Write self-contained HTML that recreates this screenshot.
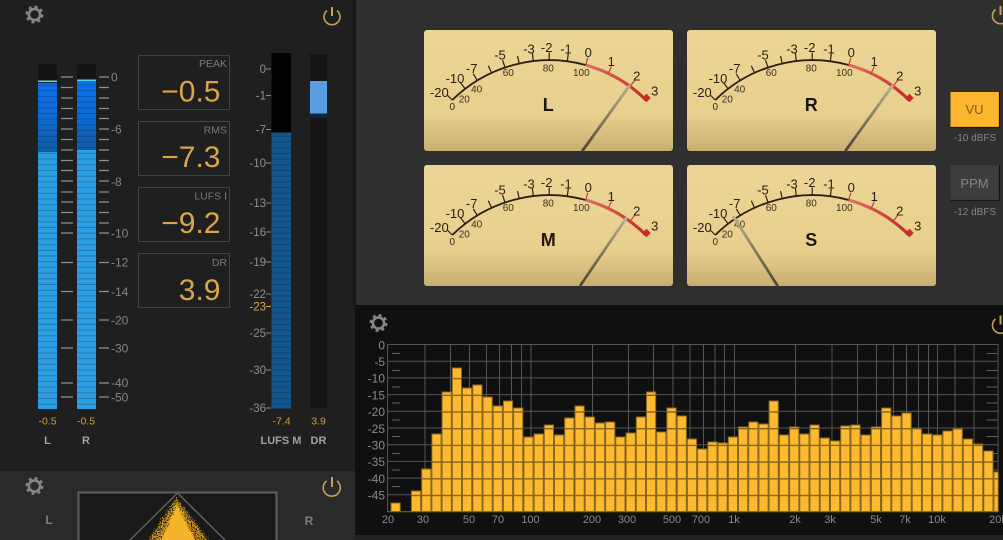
<!DOCTYPE html>
<html><head><meta charset="utf-8"><style>
html,body{margin:0;padding:0;background:#1f1f1f;width:1003px;height:540px;overflow:hidden}
svg{display:block;font-family:"Liberation Sans",sans-serif;filter:blur(.35px)}
.s{fill:#858585;font-size:12px}
.l{fill:#8e8e8e;font-size:11.5px}
.y{fill:#8a8a8a;font-size:12px;text-anchor:end}
.x{fill:#8a8a8a;font-size:11px;text-anchor:middle}
.v{fill:#d9a548;font-size:30px;text-anchor:end}
.lb{fill:#7a7a7a;font-size:10.5px;text-anchor:end}
.m{fill:#2a2112;font-size:13px;text-anchor:middle;transform:translateY(.4px)}
.n{fill:#3a3020;font-size:10px;text-anchor:middle}
.b{fill:#1c1710;font-size:18px;font-weight:bold;text-anchor:middle;transform:translateY(.8px)}
</style></head><body>
<svg width="1003" height="540" viewBox="0 0 1003 540" xmlns="http://www.w3.org/2000/svg">
<defs>
<linearGradient id="face" x1="0" y1="0" x2="0" y2="1"><stop offset="0" stop-color="#ecd596"/><stop offset=".7" stop-color="#e8cf8d"/><stop offset="1" stop-color="#c9ae72"/></linearGradient>
<linearGradient id="nd" x1="0" y1="0" x2="0" y2="1"><stop offset="0" stop-color="#b9b091"/><stop offset="1" stop-color="#4e4636"/></linearGradient>
<linearGradient id="red" gradientUnits="userSpaceOnUse" x1="586" y1="0" x2="646" y2="0"><stop offset="0" stop-color="#e0705f"/><stop offset="1" stop-color="#c42c28"/></linearGradient>
<linearGradient id="top" x1="0" y1="0" x2="0" y2="1"><stop offset="0" stop-color="#0d6fec"/><stop offset=".6" stop-color="#0d69cc"/><stop offset="1" stop-color="#0f5ca0"/></linearGradient>
<pattern id="st" width="4" height="5.7" patternUnits="userSpaceOnUse"><rect y="4.7" width="4" height="1" fill="#000" opacity=".22"/></pattern>
<pattern id="bar" width="4" height="16.7" patternUnits="userSpaceOnUse" y="344.5"><rect width="4" height="16.7" fill="#fdb92f"/><rect y="0" width="4" height="1.4" fill="#8a6418"/></pattern>
<filter id="sp" x="-30%" y="-30%" width="160%" height="160%"><feTurbulence type="fractalNoise" baseFrequency=".8" numOctaves="2" seed="4" result="n"/><feDisplacementMap in="SourceGraphic" in2="n" scale="10" xChannelSelector="R" yChannelSelector="G" result="d"/><feColorMatrix in="n" type="matrix" values="0 0 0 0 0 0 0 0 0 0 0 0 0 0 0 6 0 0 0 -2.3" result="m"/><feComposite in="d" in2="m" operator="in"/></filter>
<filter id="sq" x="-30%" y="-30%" width="160%" height="160%"><feTurbulence type="fractalNoise" baseFrequency=".8" numOctaves="2" seed="9"/><feDisplacementMap in="SourceGraphic" scale="8" xChannelSelector="R" yChannelSelector="G"/></filter>
<clipPath id="cb"><rect x="79" y="493" width="197" height="47"/></clipPath>
</defs>

<!-- backgrounds -->
<rect width="1003" height="540" fill="#1f1f1f"/>
<rect y="471" width="355" height="69" fill="#2a2a2a"/>
<rect x="353" width="4" height="306" fill="#191919"/>
<rect x="356" width="647" height="306" fill="#2f2f2f"/>
<rect x="355" y="305" width="648" height="230" fill="#101010"/>
<rect x="355" y="535" width="648" height="5" fill="#222"/>

<!-- top-left icons -->
<g fill="none" stroke="#858585"><circle cx="34.5" cy="14.5" r="5.6" stroke-width="2.6"/><circle cx="34.5" cy="14.5" r="7.8" stroke-width="2.4" stroke-dasharray="3 3.1"/></g>
<g fill="none" stroke="#c9a050" stroke-width="1.6"><path d="M327 10.5a8 8 0 1 0 10 0"/><path d="M332 7v9" stroke-width="2"/></g>

<!-- peak meters -->
<rect x="38" y="64" width="19" height="345" fill="#141414"/>
<rect x="77" y="64" width="19" height="345" fill="#141414"/>
<rect x="38" y="80.5" width="19" height="1.6" fill="#55d8e8"/>
<rect x="77" y="79.5" width="19" height="1.6" fill="#55d8e8"/>
<rect x="38" y="83" width="19" height="69" fill="url(#top)"/>
<rect x="77" y="81" width="19" height="69" fill="url(#top)"/>
<rect x="38" y="152" width="19" height="257" fill="#2c9ee2"/>
<rect x="77" y="150" width="19" height="259" fill="#2c9ee2"/>
<rect x="38" y="83" width="19" height="326" fill="url(#st)"/>
<rect x="77" y="81" width="19" height="328" fill="url(#st)"/>
<path stroke="#8f8f8f" stroke-width="1.2" fill="none" d="M61 77h12M61 87.5h12M61 98h12M61 108.5h12M61 118.5h12M61 129h12M61 139.5h12M61 150h12M61 160.5h12M61 170.5h12M61 181h12M61 192h12M61 202h12M61 212.5h12M61 223h12M61 233h12M61 262.5h12M61 291.5h12M61 320h12M61 348h12M61 383h12M61 397h12"/>
<path stroke="#8f8f8f" stroke-width="1.2" fill="none" d="M99 77h10M99 87.5h10M99 98h10M99 108.5h10M99 118.5h10M99 129h10M99 139.5h10M99 150h10M99 160.5h10M99 170.5h10M99 181h10M99 192h10M99 202h10M99 212.5h10M99 223h10M99 233h10M99 262.5h10M99 291.5h10M99 320h10M99 348h10M99 383h10M99 397h10"/>
<text class="s" x="111" y="81.5">0</text>
<text class="s" x="111" y="133.5">-6</text>
<text class="s" x="111" y="186">-8</text>
<text class="s" x="111" y="237.5">-10</text>
<text class="s" x="111" y="266.5">-12</text>
<text class="s" x="111" y="296">-14</text>
<text class="s" x="111" y="324.5">-20</text>
<text class="s" x="111" y="352.5">-30</text>
<text class="s" x="111" y="387">-40</text>
<text class="s" x="111" y="401.5">-50</text>
<g font-size="10.5" fill="#cf9c40" text-anchor="middle">
<text x="47.5" y="424.5">-0.5</text><text x="86" y="424.5">-0.5</text>
<text x="281.5" y="424.5">-7.4</text><text x="318.5" y="424.5">3.9</text>
</g>
<g font-size="11" font-weight="bold" fill="#a0a0a0" text-anchor="middle">
<text x="47.5" y="444">L</text><text x="86" y="444">R</text>
<text x="281" y="444">LUFS M</text><text x="318.5" y="444">DR</text>
</g>

<!-- readouts -->
<g fill="none" stroke="#444" stroke-width="1">
<rect x="138.5" y="55.5" width="91" height="54"/>
<rect x="138.5" y="121.5" width="91" height="54"/>
<rect x="138.5" y="187.5" width="91" height="54"/>
<rect x="138.5" y="253.5" width="91" height="54"/>
</g>
<text class="lb" x="227" y="67">PEAK</text><text class="v" x="220.5" y="101.5">−0.5</text>
<text class="lb" x="227" y="133.5">RMS</text><text class="v" x="220.5" y="167">−7.3</text>
<text class="lb" x="227" y="199.5">LUFS I</text><text class="v" x="220.5" y="233">−9.2</text>
<text class="lb" x="227" y="266">DR</text><text class="v" x="220.5" y="300">3.9</text>

<!-- LUFS + DR -->
<rect x="271.5" y="53" width="19.5" height="80" fill="#020202"/>
<rect x="271.5" y="132.5" width="19.5" height="276" fill="#14578f"/>
<rect x="271.5" y="132.5" width="19.5" height="276" fill="url(#st)"/>
<rect x="310" y="54" width="17" height="354" fill="#151515"/>
<rect x="310" y="113" width="17" height="5" fill="#10263a"/>
<rect x="310" y="81" width="17" height="32.5" fill="#5a9de0"/>
<g class="l" text-anchor="end">
<text x="266" y="73">0</text>
<text x="266" y="99.5">-1</text>
<text x="266" y="133.5">-7</text>
<text x="266" y="167">-10</text>
<text x="266" y="207">-13</text>
<text x="266" y="236">-16</text>
<text x="266" y="266">-19</text>
<text x="266" y="298">-22</text>
<text x="266" y="310.5" fill="#d9a548">-23</text>
<text x="266" y="337">-25</text>
<text x="266" y="374">-30</text>
<text x="266" y="412">-36</text>
</g>
<path stroke="#8a8a8a" fill="none" d="M266 69h5M266 95.5h5M266 129.5h5M266 163h5M266 203h5M266 232h5M266 262h5M266 294h5M266 333h5M266 370h5M266 408h5"/>
<path stroke="#d9a548" fill="none" d="M266 306.5h5"/>

<!-- vectorscope -->
<g fill="none" stroke="#858585"><circle cx="34.5" cy="486" r="5.6" stroke-width="2.6"/><circle cx="34.5" cy="486" r="7.8" stroke-width="2.4" stroke-dasharray="3 3.1"/></g>
<g fill="none" stroke="#c9a050" stroke-width="1.6"><path d="M326.5 481a8.5 8.5 0 1 0 10.5 0"/><path d="M332 477v10" stroke-width="2"/></g>
<text x="49" y="524" font-size="12" font-weight="bold" fill="#7d7d7d" text-anchor="middle">L</text>
<text x="309" y="525" font-size="12" font-weight="bold" fill="#7d7d7d" text-anchor="middle">R</text>
<rect x="78.5" y="492.5" width="198" height="60" fill="#191919" stroke="#5f5f5f" stroke-width="2"/>
<g clip-path="url(#cb)">
<path d="M177.5 493L128 542M177.5 493L227 542" stroke="#5f5f5f" stroke-width="1.5" fill="none"/>
<path d="M177 498L148 542H210z" fill="#e0a028" filter="url(#sp)"/>
<path d="M177 504L160 542H196z" fill="#f5b42c" filter="url(#sq)"/>
</g>

<!-- VU meter L -->
<g>
<rect x="424" y="30" width="249" height="121" rx="3" fill="url(#face)"/>
<path d="M452.3 100A138.4 138.4 0 0 1 585.7 65" fill="none" stroke="#2a2010" stroke-width="1.8"/>
<path d="M585.7 65A138.4 138.4 0 0 1 646 100" fill="none" stroke="url(#red)" stroke-width="3.2"/>
<g stroke="#2a2010" stroke-width="1.2">
<line x1="549.2" y1="60.3" x2="549.2" y2="54" transform="rotate(-44.5 549.2 198.7)"/>
<line x1="549.2" y1="60.3" x2="549.2" y2="52.5" transform="rotate(-37.4 549.2 198.7)"/>
<line x1="549.2" y1="60.3" x2="549.2" y2="52.5" transform="rotate(-31.3 549.2 198.7)"/>
<line x1="549.2" y1="60.3" x2="549.2" y2="52.5" transform="rotate(-24.6 549.2 198.7)"/>
<line x1="549.2" y1="60.3" x2="549.2" y2="52.5" transform="rotate(-18.6 549.2 198.7)"/>
<line x1="549.2" y1="60.3" x2="549.2" y2="52.5" transform="rotate(-12.5 549.2 198.7)"/>
<line x1="549.2" y1="60.3" x2="549.2" y2="52.5" transform="rotate(-6.6 549.2 198.7)"/>
<line x1="549.2" y1="60.3" x2="549.2" y2="52.5"/>
<line x1="549.2" y1="60.3" x2="549.2" y2="52.5" transform="rotate(7.5 549.2 198.7)"/>
</g>
<g stroke="#c0453a" stroke-width="1.2">
<line x1="549.2" y1="60.3" x2="549.2" y2="52.5" transform="rotate(15.3 549.2 198.7)"/>
<line x1="549.2" y1="60.3" x2="549.2" y2="52.5" transform="rotate(25.2 549.2 198.7)"/>
<line x1="549.2" y1="60.3" x2="549.2" y2="52.5" transform="rotate(35.8 549.2 198.7)"/>
</g>
<rect x="643.5" y="95" width="6" height="6" fill="#c42c28" transform="rotate(45 646.5 98)"/>
<text class="m" x="439.3" y="96.5">-20</text><text class="m" x="455" y="82.5">-10</text><text class="m" x="471.7" y="72.5">-7</text><text class="m" x="500" y="59">-5</text><text class="m" x="529" y="53">-3</text><text class="m" x="546.7" y="51.8">-2</text><text class="m" x="566" y="53">-1</text><text class="m" x="588.3" y="56.5">0</text><text class="m" x="611.3" y="65.8">1</text><text class="m" x="636.7" y="80">2</text><text class="m" x="654.7" y="95">3</text>
<text class="n" x="452.3" y="110">0</text><text class="n" x="464.3" y="102.3">20</text><text class="n" x="476.7" y="92.3">40</text><text class="n" x="508.3" y="76">60</text><text class="n" x="548.3" y="71.6">80</text><text class="n" x="581.3" y="76">100</text>
<text class="b" x="548.3" y="110">L</text>
<line x1="630" y1="85" x2="582.3" y2="151" stroke="url(#nd)" stroke-width="2.8"/>
</g>

<!-- VU meter R -->
<g transform="translate(263 0)">
<rect x="424" y="30" width="249" height="121" rx="3" fill="url(#face)"/>
<path d="M452.3 100A138.4 138.4 0 0 1 585.7 65" fill="none" stroke="#2a2010" stroke-width="1.8"/>
<path d="M585.7 65A138.4 138.4 0 0 1 646 100" fill="none" stroke="url(#red)" stroke-width="3.2"/>
<g stroke="#2a2010" stroke-width="1.2">
<line x1="549.2" y1="60.3" x2="549.2" y2="54" transform="rotate(-44.5 549.2 198.7)"/>
<line x1="549.2" y1="60.3" x2="549.2" y2="52.5" transform="rotate(-37.4 549.2 198.7)"/>
<line x1="549.2" y1="60.3" x2="549.2" y2="52.5" transform="rotate(-31.3 549.2 198.7)"/>
<line x1="549.2" y1="60.3" x2="549.2" y2="52.5" transform="rotate(-24.6 549.2 198.7)"/>
<line x1="549.2" y1="60.3" x2="549.2" y2="52.5" transform="rotate(-18.6 549.2 198.7)"/>
<line x1="549.2" y1="60.3" x2="549.2" y2="52.5" transform="rotate(-12.5 549.2 198.7)"/>
<line x1="549.2" y1="60.3" x2="549.2" y2="52.5" transform="rotate(-6.6 549.2 198.7)"/>
<line x1="549.2" y1="60.3" x2="549.2" y2="52.5"/>
<line x1="549.2" y1="60.3" x2="549.2" y2="52.5" transform="rotate(7.5 549.2 198.7)"/>
</g>
<g stroke="#c0453a" stroke-width="1.2">
<line x1="549.2" y1="60.3" x2="549.2" y2="52.5" transform="rotate(15.3 549.2 198.7)"/>
<line x1="549.2" y1="60.3" x2="549.2" y2="52.5" transform="rotate(25.2 549.2 198.7)"/>
<line x1="549.2" y1="60.3" x2="549.2" y2="52.5" transform="rotate(35.8 549.2 198.7)"/>
</g>
<rect x="643.5" y="95" width="6" height="6" fill="#c42c28" transform="rotate(45 646.5 98)"/>
<text class="m" x="439.3" y="96.5">-20</text><text class="m" x="455" y="82.5">-10</text><text class="m" x="471.7" y="72.5">-7</text><text class="m" x="500" y="59">-5</text><text class="m" x="529" y="53">-3</text><text class="m" x="546.7" y="51.8">-2</text><text class="m" x="566" y="53">-1</text><text class="m" x="588.3" y="56.5">0</text><text class="m" x="611.3" y="65.8">1</text><text class="m" x="636.7" y="80">2</text><text class="m" x="654.7" y="95">3</text>
<text class="n" x="452.3" y="110">0</text><text class="n" x="464.3" y="102.3">20</text><text class="n" x="476.7" y="92.3">40</text><text class="n" x="508.3" y="76">60</text><text class="n" x="548.3" y="71.6">80</text><text class="n" x="581.3" y="76">100</text>
<text class="b" x="548.3" y="110">R</text>
<line x1="630" y1="85" x2="582.3" y2="151" stroke="url(#nd)" stroke-width="2.8"/>
</g>

<!-- VU meter M -->
<g transform="translate(0 135)">
<rect x="424" y="30" width="249" height="121" rx="3" fill="url(#face)"/>
<path d="M452.3 100A138.4 138.4 0 0 1 585.7 65" fill="none" stroke="#2a2010" stroke-width="1.8"/>
<path d="M585.7 65A138.4 138.4 0 0 1 646 100" fill="none" stroke="url(#red)" stroke-width="3.2"/>
<g stroke="#2a2010" stroke-width="1.2">
<line x1="549.2" y1="60.3" x2="549.2" y2="54" transform="rotate(-44.5 549.2 198.7)"/>
<line x1="549.2" y1="60.3" x2="549.2" y2="52.5" transform="rotate(-37.4 549.2 198.7)"/>
<line x1="549.2" y1="60.3" x2="549.2" y2="52.5" transform="rotate(-31.3 549.2 198.7)"/>
<line x1="549.2" y1="60.3" x2="549.2" y2="52.5" transform="rotate(-24.6 549.2 198.7)"/>
<line x1="549.2" y1="60.3" x2="549.2" y2="52.5" transform="rotate(-18.6 549.2 198.7)"/>
<line x1="549.2" y1="60.3" x2="549.2" y2="52.5" transform="rotate(-12.5 549.2 198.7)"/>
<line x1="549.2" y1="60.3" x2="549.2" y2="52.5" transform="rotate(-6.6 549.2 198.7)"/>
<line x1="549.2" y1="60.3" x2="549.2" y2="52.5"/>
<line x1="549.2" y1="60.3" x2="549.2" y2="52.5" transform="rotate(7.5 549.2 198.7)"/>
</g>
<g stroke="#c0453a" stroke-width="1.2">
<line x1="549.2" y1="60.3" x2="549.2" y2="52.5" transform="rotate(15.3 549.2 198.7)"/>
<line x1="549.2" y1="60.3" x2="549.2" y2="52.5" transform="rotate(25.2 549.2 198.7)"/>
<line x1="549.2" y1="60.3" x2="549.2" y2="52.5" transform="rotate(35.8 549.2 198.7)"/>
</g>
<rect x="643.5" y="95" width="6" height="6" fill="#c42c28" transform="rotate(45 646.5 98)"/>
<text class="m" x="439.3" y="96.5">-20</text><text class="m" x="455" y="82.5">-10</text><text class="m" x="471.7" y="72.5">-7</text><text class="m" x="500" y="59">-5</text><text class="m" x="529" y="53">-3</text><text class="m" x="546.7" y="51.8">-2</text><text class="m" x="566" y="53">-1</text><text class="m" x="588.3" y="56.5">0</text><text class="m" x="611.3" y="65.8">1</text><text class="m" x="636.7" y="80">2</text><text class="m" x="654.7" y="95">3</text>
<text class="n" x="452.3" y="110">0</text><text class="n" x="464.3" y="102.3">20</text><text class="n" x="476.7" y="92.3">40</text><text class="n" x="508.3" y="76">60</text><text class="n" x="548.3" y="71.6">80</text><text class="n" x="581.3" y="76">100</text>
<text class="b" x="548.3" y="110">M</text>
<line x1="627" y1="82" x2="580" y2="151" stroke="url(#nd)" stroke-width="2.8"/>
</g>

<!-- VU meter S -->
<g transform="translate(263 135)">
<rect x="424" y="30" width="249" height="121" rx="3" fill="url(#face)"/>
<path d="M452.3 100A138.4 138.4 0 0 1 585.7 65" fill="none" stroke="#2a2010" stroke-width="1.8"/>
<path d="M585.7 65A138.4 138.4 0 0 1 646 100" fill="none" stroke="url(#red)" stroke-width="3.2"/>
<g stroke="#2a2010" stroke-width="1.2">
<line x1="549.2" y1="60.3" x2="549.2" y2="54" transform="rotate(-44.5 549.2 198.7)"/>
<line x1="549.2" y1="60.3" x2="549.2" y2="52.5" transform="rotate(-37.4 549.2 198.7)"/>
<line x1="549.2" y1="60.3" x2="549.2" y2="52.5" transform="rotate(-31.3 549.2 198.7)"/>
<line x1="549.2" y1="60.3" x2="549.2" y2="52.5" transform="rotate(-24.6 549.2 198.7)"/>
<line x1="549.2" y1="60.3" x2="549.2" y2="52.5" transform="rotate(-18.6 549.2 198.7)"/>
<line x1="549.2" y1="60.3" x2="549.2" y2="52.5" transform="rotate(-12.5 549.2 198.7)"/>
<line x1="549.2" y1="60.3" x2="549.2" y2="52.5" transform="rotate(-6.6 549.2 198.7)"/>
<line x1="549.2" y1="60.3" x2="549.2" y2="52.5"/>
<line x1="549.2" y1="60.3" x2="549.2" y2="52.5" transform="rotate(7.5 549.2 198.7)"/>
</g>
<g stroke="#c0453a" stroke-width="1.2">
<line x1="549.2" y1="60.3" x2="549.2" y2="52.5" transform="rotate(15.3 549.2 198.7)"/>
<line x1="549.2" y1="60.3" x2="549.2" y2="52.5" transform="rotate(25.2 549.2 198.7)"/>
<line x1="549.2" y1="60.3" x2="549.2" y2="52.5" transform="rotate(35.8 549.2 198.7)"/>
</g>
<rect x="643.5" y="95" width="6" height="6" fill="#c42c28" transform="rotate(45 646.5 98)"/>
<text class="m" x="439.3" y="96.5">-20</text><text class="m" x="455" y="82.5">-10</text><text class="m" x="471.7" y="72.5">-7</text><text class="m" x="500" y="59">-5</text><text class="m" x="529" y="53">-3</text><text class="m" x="546.7" y="51.8">-2</text><text class="m" x="566" y="53">-1</text><text class="m" x="588.3" y="56.5">0</text><text class="m" x="611.3" y="65.8">1</text><text class="m" x="636.7" y="80">2</text><text class="m" x="654.7" y="95">3</text>
<text class="n" x="452.3" y="110">0</text><text class="n" x="464.3" y="102.3">20</text><text class="n" x="476.7" y="92.3">40</text><text class="n" x="508.3" y="76">60</text><text class="n" x="548.3" y="71.6">80</text><text class="n" x="581.3" y="76">100</text>
<text class="b" x="548.3" y="110">S</text>
<line x1="470" y1="81" x2="514.7" y2="151" stroke="url(#nd)" stroke-width="2.8"/>
</g>

<!-- buttons -->
<rect x="950.5" y="92" width="48.5" height="35" fill="#fdb52d"/>
<path d="M950.5 127.5h49V92" fill="none" stroke="#151515" stroke-width="1.2"/>
<text x="974.5" y="114" font-size="13" fill="#7c5a1e" text-anchor="middle">VU</text>
<text x="975" y="141" font-size="10" fill="#858585" text-anchor="middle">-10 dBFS</text>
<rect x="950.5" y="165" width="48.5" height="35" fill="#3d3d3d"/>
<path d="M950.5 200.5h49V165" fill="none" stroke="#151515" stroke-width="1.2"/>
<text x="974.5" y="188" font-size="13" fill="#858585" text-anchor="middle">PPM</text>
<text x="975" y="215" font-size="10" fill="#858585" text-anchor="middle">-12 dBFS</text>
<g fill="none" stroke="#c9a050" stroke-width="1.6"><path d="M995.5 9.5a8 8 0 1 0 10 0"/><path d="M1000.5 6v9" stroke-width="2"/></g>

<!-- spectrum -->
<g fill="none" stroke="#858585"><circle cx="378.5" cy="323" r="5.6" stroke-width="2.6"/><circle cx="378.5" cy="323" r="7.8" stroke-width="2.4" stroke-dasharray="3 3.1"/></g>
<g fill="none" stroke="#c9a050" stroke-width="1.6"><path d="M995.5 319a8 8 0 1 0 10 0"/><path d="M1000.5 315.5v9" stroke-width="2"/></g>
<path stroke="#555" stroke-width="1" fill="none" d="M387 344.5H998M387 361.2H998M387 377.9H998M387 394.6H998M387 411.3H998M387 428H998M387 444.7H998M387 461.4H998M387 478.1H998M387 494.8H998
M387.5 344V512M425 344V512M450.5 344V512M469.5 344V512M486.5 344V512M499.5 344V512M511.5 344V512M521.5 344V512M531 344V512M592.5 344V512M628.5 344V512M653.5 344V512M673 344V512M690 344V512M703.5 344V512M715 344V512M724.5 344V512M734.5 344V512M795.5 344V512M832 344V512M857.5 344V512M876.5 344V512M893.5 344V512M906.5 344V512M918.5 344V512M928.5 344V512M937.5 344V512M955 344V512M974 344V512M998 344V512"/>
<path stroke="#5e5e5e" stroke-width="1" fill="none" d="M392 353.5h8M392 370.5h8M392 387h8M392 403h8M392 420h8M392 436.5h8M392 453.5h8M392 470h8M392 486.5h8M986.5 353.5h11M986.5 370.5h11M986.5 387h11M986.5 403h11M986.5 420h11M986.5 436.5h11M986.5 453.5h11M986.5 470h11M986.5 503h11"/>
<path fill="url(#bar)" stroke="#8a6820" stroke-width="1" d="M391 503h9.2V511.5h-9.2zM411.4 491h9.2V511.5h-9.2zM421.7 469h9.2V511.5h-9.2zM431.9 434h9.2V511.5h-9.2zM442.1 392h9.2V511.5h-9.2zM452.3 368h9.2V511.5h-9.2zM462.5 388h9.2V511.5h-9.2zM472.8 385h9.2V511.5h-9.2zM483 397h9.2V511.5h-9.2zM493.2 406h9.2V511.5h-9.2zM503.4 401h9.2V511.5h-9.2zM513.6 408h9.2V511.5h-9.2zM523.9 437h9.2V511.5h-9.2zM534.1 434h9.2V511.5h-9.2zM544.3 425h9.2V511.5h-9.2zM554.5 435h9.2V511.5h-9.2zM564.7 418h9.2V511.5h-9.2zM575 406h9.2V511.5h-9.2zM585.2 417h9.2V511.5h-9.2zM595.4 423h9.2V511.5h-9.2zM605.6 422h9.2V511.5h-9.2zM615.8 437h9.2V511.5h-9.2zM626.1 433h9.2V511.5h-9.2zM636.3 417h9.2V511.5h-9.2zM646.5 392h9.2V511.5h-9.2zM656.7 432h9.2V511.5h-9.2zM666.9 408h9.2V511.5h-9.2zM677.2 416h9.2V511.5h-9.2zM687.4 439h9.2V511.5h-9.2zM697.6 449h9.2V511.5h-9.2zM707.8 442h9.2V511.5h-9.2zM718 443h9.2V511.5h-9.2zM728.3 437h9.2V511.5h-9.2zM738.5 427h9.2V511.5h-9.2zM748.7 422h9.2V511.5h-9.2zM758.9 424h9.2V511.5h-9.2zM769.1 401h9.2V511.5h-9.2zM779.4 435h9.2V511.5h-9.2zM789.6 427h9.2V511.5h-9.2zM799.8 434h9.2V511.5h-9.2zM810 425h9.2V511.5h-9.2zM820.2 438h9.2V511.5h-9.2zM830.5 441h9.2V511.5h-9.2zM840.7 426h9.2V511.5h-9.2zM850.9 425h9.2V511.5h-9.2zM861.1 435h9.2V511.5h-9.2zM871.3 427h9.2V511.5h-9.2zM881.6 408h9.2V511.5h-9.2zM891.8 416h9.2V511.5h-9.2zM902 413h9.2V511.5h-9.2zM912.2 429h9.2V511.5h-9.2zM922.4 434h9.2V511.5h-9.2zM932.7 435h9.2V511.5h-9.2zM942.9 431h9.2V511.5h-9.2zM953.1 429h9.2V511.5h-9.2zM963.3 439h9.2V511.5h-9.2zM973.5 444h9.2V511.5h-9.2zM983.8 451h9.2V511.5h-9.2zM994 472h4.2V511.5h-4.2z"/>
<path d="M387 511.8H998" stroke="#8a6820" stroke-width="1"/>
<text class="y" x="385" y="349.3">0</text><text class="y" x="385" y="366">-5</text><text class="y" x="385" y="382.7">-10</text><text class="y" x="385" y="399.4">-15</text><text class="y" x="385" y="416.1">-20</text><text class="y" x="385" y="432.8">-25</text><text class="y" x="385" y="449.5">-30</text><text class="y" x="385" y="466.2">-35</text><text class="y" x="385" y="482.9">-40</text><text class="y" x="385" y="499.6">-45</text>
<text class="x" x="388" y="523">20</text><text class="x" x="423" y="523">30</text><text class="x" x="469" y="523">50</text><text class="x" x="498" y="523">70</text><text class="x" x="530.5" y="523">100</text><text class="x" x="592" y="523">200</text><text class="x" x="627" y="523">300</text><text class="x" x="672" y="523">500</text><text class="x" x="701" y="523">700</text><text class="x" x="734" y="523">1k</text><text class="x" x="795" y="523">2k</text><text class="x" x="830" y="523">3k</text><text class="x" x="876" y="523">5k</text><text class="x" x="905" y="523">7k</text><text class="x" x="937" y="523">10k</text><text class="x" x="998" y="523">20k</text>
</svg>
</body></html>
